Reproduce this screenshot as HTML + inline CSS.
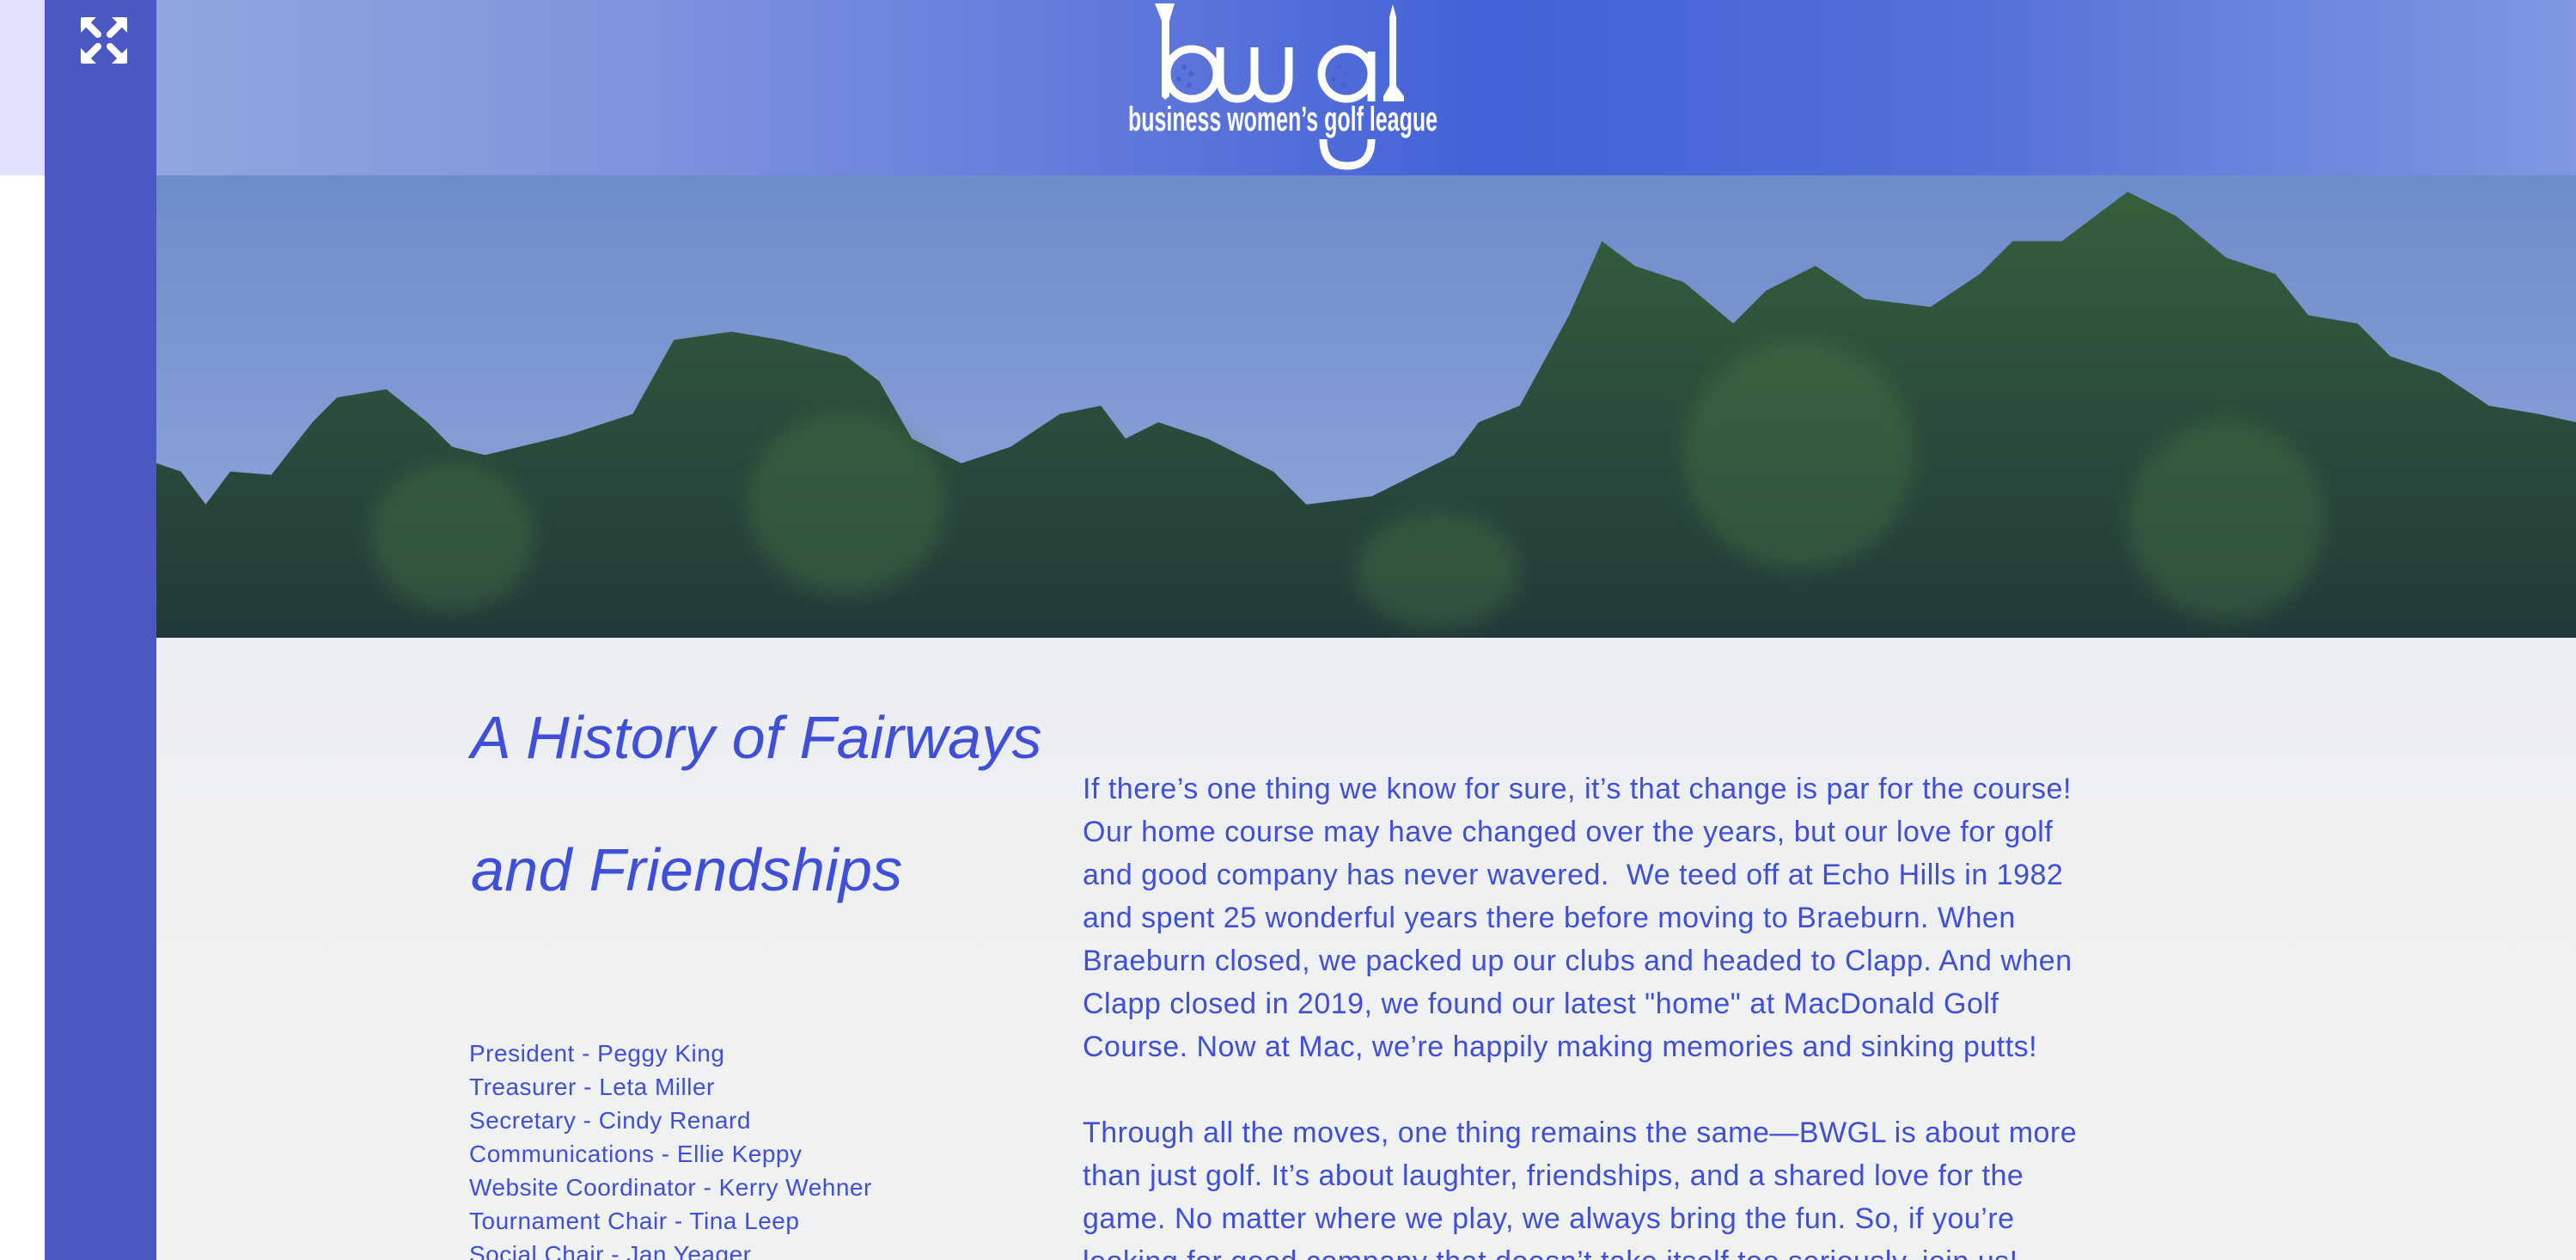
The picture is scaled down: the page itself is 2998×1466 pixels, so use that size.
<!DOCTYPE html>
<html><head><meta charset="utf-8"><style>
html,body{margin:0;padding:0;width:2998px;height:1466px;overflow:hidden;background:#fff;font-family:"Liberation Sans",sans-serif}
#wrap{position:relative;width:2998px;height:1466px;overflow:hidden}
.abs{position:absolute}
.t{color:#3f4fd8}
</style></head><body><div id="wrap">
<div class="abs" style="left:0;top:0;width:52px;height:204px;background:#dfe0fb"></div>
<div class="abs" style="left:52px;top:0;width:130px;height:1466px;background:#4b57c2"></div>
<svg class="abs" style="left:92px;top:18px" width="58" height="58" viewBox="0 0 58 58">
<g stroke="#fff" stroke-width="8" stroke-linecap="round" fill="#fff">
<path d="M6 6 L22 22 M52 6 L36 22 M6 52 L22 36 M52 52 L36 36"/>
</g>
<g fill="#fff">
<path d="M2 4 Q2 2 4 2 L20 2 L2 20Z"/><path d="M56 4 Q56 2 54 2 L38 2 L56 20Z"/>
<path d="M2 54 Q2 56 4 56 L20 56 L2 38Z"/><path d="M56 54 Q56 56 54 56 L38 56 L56 38Z"/>
</g></svg>
<div class="abs" style="left:182px;top:0;width:2816px;height:204px;background:linear-gradient(90deg,#90a6dd 0%,#7d94dd 20%,#6078dc 40%,#4262d6 55%,#5471d9 75%,#7f98e0 100%)"></div>
<svg class="abs" style="left:1300px;top:0" width="400" height="204" viewBox="1300 0 400 204">
<g fill="#fff">
<path d="M1344 4 L1367 4 L1361 24 L1361 112 L1356 116 L1352 112 L1352 24Z"/>
<path d="M1621 5 L1625 20 L1625 100 L1634 112 L1634 118 L1610 118 L1610 112 L1617 100 L1617 20Z"/>
</g>
<g fill="none" stroke="#fff" stroke-width="9">
<circle cx="1387" cy="86" r="29"/>
<path d="M1420 55 L1420 90 Q1420 115 1440 115 Q1460 115 1460 90 L1460 55 M1460 90 Q1460 115 1480 115 Q1500 115 1500 90 L1500 55"/>
<circle cx="1567" cy="86" r="29"/>
<path d="M1596 60 L1596 118"/>
<path d="M1540 162 Q1540 193 1568 193 Q1596 193 1596 162"/>
</g>
<g fill="#4262d6"><circle cx="1378" cy="78" r="3"/><circle cx="1372" cy="92" r="3"/><circle cx="1384" cy="99" r="3"/><circle cx="1386" cy="86" r="3"/><circle cx="1558" cy="78" r="3"/><circle cx="1552" cy="92" r="3"/><circle cx="1564" cy="99" r="3"/><circle cx="1566" cy="86" r="3"/></g>
<text x="1493" y="152" text-anchor="middle" fill="#fff" font-family="Liberation Sans Narrow,Liberation Sans,sans-serif" font-weight="bold" font-size="40" textLength="360" lengthAdjust="spacingAndGlyphs">business women’s golf league</text>
</svg>
<svg class="abs" style="left:182px;top:204px" width="2816" height="538" viewBox="0 0 1473 281" preserveAspectRatio="none">
<defs><linearGradient id="sky" x1="0" y1="0" x2="0" y2="1"><stop offset="0" stop-color="#6c8cca"/><stop offset="1" stop-color="#94a9dc"/></linearGradient>
<linearGradient id="tr" x1="0" y1="0" x2="0" y2="1"><stop offset="0" stop-color="#355f3c"/><stop offset="1" stop-color="#22393a"/></linearGradient>
<filter id="bl"><feGaussianBlur stdDeviation="6"/></filter></defs>
<rect width="1473" height="281" fill="url(#sky)"/>
<path fill="url(#tr)" d="M0 175 L15 180 L30 200 L45 180 L70 182 L95 150 L110 135 L140 130 L165 150 L180 165 L200 170 L250 158 L290 145 L315 100 L350 95 L380 100 L420 110 L440 125 L460 160 L490 175 L520 165 L550 145 L575 140 L590 160 L610 150 L640 160 L660 170 L680 180 L700 200 L740 195 L760 185 L790 170 L805 150 L830 140 L860 85 L880 40 L900 55 L930 65 L960 90 L980 70 L1010 55 L1040 75 L1080 80 L1110 60 L1130 40 L1160 40 L1200 10 L1230 25 L1260 50 L1290 60 L1310 85 L1340 90 L1360 110 L1390 120 L1420 140 L1450 145 L1473 150 L1473 281 L0 281Z"/>
<g fill="#4d7d45" opacity=".35" filter="url(#bl)"><ellipse cx="180" cy="220" rx="50" ry="45"/><ellipse cx="420" cy="200" rx="60" ry="55"/><ellipse cx="1000" cy="170" rx="70" ry="70"/><ellipse cx="1260" cy="210" rx="60" ry="60"/><ellipse cx="780" cy="240" rx="50" ry="35"/></g>
</svg>
<div class="abs" style="left:182px;top:742px;width:2816px;height:724px;background:linear-gradient(180deg,#eaedf1 0%,#eef0f2 30%,#f0f2f2 100%)"></div>
<div class="abs t" style="left:548px;top:818px;font-size:70px;font-style:italic;line-height:80px;letter-spacing:0.3px">A History of Fairways</div>
<div class="abs t" style="left:548px;top:972px;font-size:70px;font-style:italic;line-height:80px;letter-spacing:0.3px">and Friendships</div>
<div class="abs t" style="left:546px;top:1206px;font-size:28px;line-height:39px;letter-spacing:0.5px">President - Peggy King<br>Treasurer - Leta Miller<br>Secretary - Cindy Renard<br>Communications - Ellie Keppy<br>Website Coordinator - Kerry Wehner<br>Tournament Chair - Tina Leep<br>Social Chair - Jan Yeager</div>
<div class="abs t" style="left:1260px;top:893px;width:1300px;font-size:34px;line-height:50px;letter-spacing:0.5px;white-space:nowrap">If there’s one thing we know for sure, it’s that change is par for the course!<br>Our home course may have changed over the years, but our love for golf<br>and good company has never wavered.&nbsp; We teed off at Echo Hills in 1982<br>and spent 25 wonderful years there before moving to Braeburn. When<br>Braeburn closed, we packed up our clubs and headed to Clapp. And when<br>Clapp closed in 2019, we found our latest "home" at MacDonald Golf<br>Course. Now at Mac, we’re happily making memories and sinking putts!<br><br>Through all the moves, one thing remains the same—BWGL is about more<br>than just golf. It’s about laughter, friendships, and a shared love for the<br>game. No matter where we play, we always bring the fun. So, if you’re<br>looking for good company that doesn’t take itself too seriously, join us!</div>
</div></body></html>
